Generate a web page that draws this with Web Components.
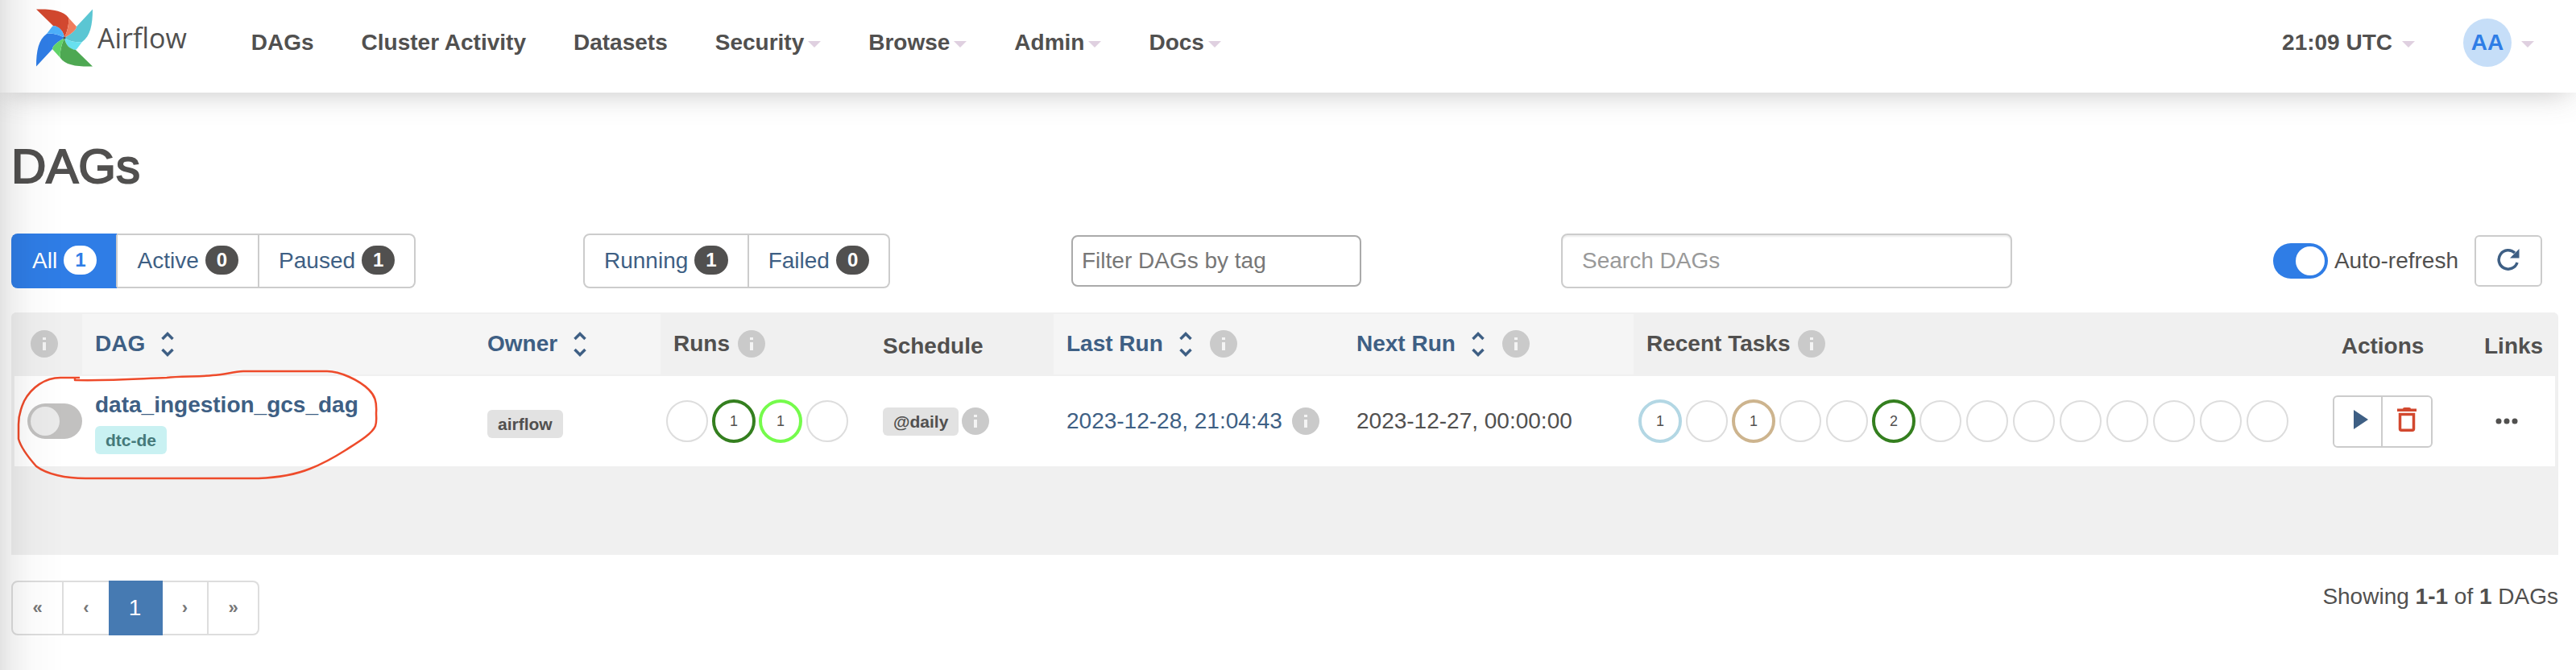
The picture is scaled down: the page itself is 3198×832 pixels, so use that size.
<!DOCTYPE html>
<html lang="en">
<head>
<meta charset="utf-8">
<title>DAGs - Airflow</title>
<style>
  body {
    margin: 0;
    background: #fff;
    color: #51504f;
    font: 28px/40px "Liberation Sans", Arial, sans-serif;
    --link: #3e5f84;
    --primary: #2f7de6;
    --line: #ccc;
    --panel: #f0f0f0;
  }
  /* soft shade along the window's left edge */
  body::after {
    content: "";
    position: fixed;
    inset: 0 auto 0 0;
    width: 80px;
    pointer-events: none;
    background: linear-gradient(90deg, rgba(0,0,0,.11), rgba(0,0,0,.06) 16px, rgba(0,0,0,.02) 40px, transparent);
  }
  main { padding: 59px 22px 0 14px; }
  h1 { margin: 0 0 50px; font-size: 60px; line-height: 66px; font-weight: 500; -webkit-text-stroke: 2px; }
  .filters {
    display: grid;
    grid-template-columns: 710fr 606fr 608fr 1238fr;
    align-items: center;
    margin-bottom: 30px;
  }
  .tail { display: flex; align-items: center; justify-content: space-between; padding-right: 20px; }
  .refresh { display: flex; align-items: center; gap: 20px; }
  .foot { display: flex; justify-content: space-between; align-items: flex-start; margin-top: 32px; }
</style>
</head>
<body>

<af-navbar>
  <af-nav-item>DAGs</af-nav-item>
  <af-nav-item>Cluster Activity</af-nav-item>
  <af-nav-item>Datasets</af-nav-item>
  <af-nav-item menu>Security</af-nav-item>
  <af-nav-item menu>Browse</af-nav-item>
  <af-nav-item menu>Admin</af-nav-item>
  <af-nav-item menu>Docs</af-nav-item>
  <af-nav-item slot="end" menu wide>21:09 UTC</af-nav-item>
  <af-nav-item slot="end" menu wide avatar>AA</af-nav-item>
</af-navbar>

<main>
  <h1>DAGs</h1>
  <div class="filters">
    <af-button-group>
      <af-filter-button position="first" active count="1">All</af-filter-button>
      <af-filter-button count="0">Active</af-filter-button>
      <af-filter-button position="last" count="1">Paused</af-filter-button>
    </af-button-group>
    <af-button-group>
      <af-filter-button position="first" count="1">Running</af-filter-button>
      <af-filter-button position="last" count="0">Failed</af-filter-button>
    </af-button-group>
    <af-text-field variant="tag" label="Filter DAGs by tag"></af-text-field>
    <div class="tail">
      <af-text-field variant="search" label="Search DAGs"></af-text-field>
      <div class="refresh">
        <af-switch checked>Auto-refresh</af-switch>
        <af-refresh-button></af-refresh-button>
      </div>
    </div>
  </div>
  <af-dag-table></af-dag-table>
  <div class="foot">
    <af-pagination></af-pagination>
    <div>Showing <strong>1-1</strong> of <strong>1</strong> DAGs</div>
  </div>
</main>

<script>
const define = (name, render) => customElements.define(name, class extends HTMLElement {
  constructor() {
    super();
    this.attachShadow({ mode: 'open' });
  }
  connectedCallback() {
    const t = document.createElement('template');
    t.innerHTML = render(this);
    this.shadowRoot.replaceChildren(t.content.cloneNode(true));
  }
});

define('af-logo', () => `
<style>
  :host { display: block; }
  a { display: flex; align-items: center; gap: 5px; color: inherit; text-decoration: none; }
  svg { display: block; }
  span { font: 400 34px/40px "Open Sans", sans-serif; }
</style>
<a href="#home">
  <svg width="72" height="72" viewBox="44 12 72 72" aria-hidden="true">
    <path fill="#5bc6d3" d="M115 12.500 95 34C94 40 86 44 80 48C87 53 97 54 102 53C112 46 115 32 115 12.500Z"/>
    <path fill="#68e0ef" d="M80 48C87 53 97 54 102 53L96 61Q95 63 93 63C86 62 81 56 80 48Z"/>
    <path fill="#d2482f" d="M45 12.500C64 12 79 14 85 23C86 32 83 41 80 48C79 40 74 34 66 33Z"/>
    <path fill="#f07c5c" d="M85 23 95 34C94 40 86 44 80 48C83 41 86 32 85 23Z"/>
    <g transform="rotate(180 80 48)">
      <path fill="#2f7de6" d="M115 12.500 95 34C94 40 86 44 80 48C87 53 97 54 102 53C112 46 115 32 115 12.500Z"/>
      <path fill="#4eb0fa" d="M80 48C87 53 97 54 102 53L96 61Q95 63 93 63C86 62 81 56 80 48Z"/>
      <path fill="#4ea852" d="M45 12.500C64 12 79 14 85 23C86 32 83 41 80 48C79 40 74 34 66 33Z"/>
      <path fill="#62d46a" d="M85 23 95 34C94 40 86 44 80 48C83 41 86 32 85 23Z"/>
    </g>
    <circle cx="80" cy="48" r="1.500" fill="#51504f"/>
  </svg>
  <span>Airflow</span>
</a>`);

define('af-navbar', () => `
<style>
  :host { display: block; }
  header {
    display: flex;
    align-items: center;
    box-sizing: border-box;
    min-height: 115px;
    padding: 0 52px 9px 44px;
    background: #fff;
    box-shadow: 0 8px 36px -8px rgba(81,80,79,.34);
  }
  af-logo { padding-bottom: 12px; }
  nav, .end { display: flex; align-items: center; }
  nav { gap: 59px; margin-left: 80px; }
  .end { gap: 60px; margin-left: auto; }
</style>
<header>
  <af-logo></af-logo>
  <nav><slot></slot></nav>
  <div class="end"><slot name="end"></slot></div>
</header>`);

define('af-nav-item', el => `
<style>
  :host { display: block; }
  a, button {
    display: flex; align-items: center; gap: 5px;
    margin: 0; padding: 0; border: 0; background: none;
    color: inherit; font: bold 28px/40px "Liberation Sans", Arial, sans-serif;
    text-decoration: none; white-space: nowrap;
  }
  :host([wide]) button { gap: 12px; }
  :host([avatar]) .label {
    width: 60px; border-radius: 50%; background: #c6def8; color: var(--primary);
    line-height: 60px; text-align: center;
  }
  i { border: 8px solid transparent; border-top-color: #dfd0e0; border-bottom: 0; margin-top: 4px; }
</style>
${el.hasAttribute('menu')
  ? '<button type="button"><span class="label"><slot></slot></span><i></i></button>'
  : '<a href="#nav"><slot></slot></a>'}`);

define('af-button-group', () => `
<style>:host { display: flex; }</style><slot></slot>`);

define('af-filter-button', el => `
<style>
  :host { display: block; }
  a {
    display: flex; align-items: center; gap: 8px; box-sizing: border-box; height: 68px;
    padding: 0 24px; border: 2px solid var(--line); border-left-width: 0;
    color: var(--link); text-decoration: none;
  }
  span { padding: 0 14px; border-radius: 18px; background: #51504f; color: #fff; font-weight: bold; font-size: 24px; line-height: 36px; margin-bottom: 2px; }
  :host([position=first]) a { border-left-width: 2px; border-radius: 8px 0 0 8px; }
  :host([position=last]) a { border-radius: 0 8px 8px 0; }
  :host([active]) a { background: var(--primary); border-color: var(--primary); color: #fff; border-right-color: var(--line); }
  :host([active]) span { background: #fff; color: var(--primary); }
</style>
<a href="#filter"><slot></slot><span>${el.getAttribute('count')}</span></a>`);

define('af-text-field', el => `
<style>
  :host { display: block; }
  input {
    display: block; box-sizing: border-box; margin: 0; background: #fff; color: #51504f;
    font: 28px/40px "Liberation Sans", Arial, sans-serif; border-radius: 8px;
  }
  :host([variant=tag]) input { width: 360px; height: 64px; padding: 0 11px; border: 2px solid #aaa; }
  :host([variant=search]) input { width: 560px; height: 68px; padding: 0 24px; border: 2px solid var(--line); box-shadow: inset 0 2px 2px rgba(0,0,0,.08); }
  input::placeholder { color: #777; opacity: 1; }
  :host([variant=search]) input::placeholder { color: #999; }
</style>
<input type="text" placeholder="${el.getAttribute('label')}" aria-label="${el.getAttribute('label')}">`);

define('af-switch', el => `
<style>
  :host { display: block; }
  label { display: flex; align-items: center; gap: 8px; white-space: nowrap; }
  input {
    appearance: none; display: block; box-sizing: border-box; margin: 0;
    width: 68px; height: 44px; padding: 4px; border-radius: 22px; background: #c2c1c0;
  }
  input::before { content: ""; display: block; width: 36px; height: 36px; border-radius: 50%; background: #ebebeb; }
  input:checked { background: var(--primary); }
  input:checked::before { margin-left: auto; background: #fff; }
</style>
<label><input type="checkbox" ${el.hasAttribute('checked') ? 'checked' : ''} ${el.hasAttribute('label') ? `aria-label="${el.getAttribute('label')}"` : ''}><slot></slot></label>`);

define('af-refresh-button', () => `
<style>
  :host { display: block; }
  button {
    display: flex; align-items: center; justify-content: center; box-sizing: border-box;
    width: 84px; height: 64px; margin: 0; padding: 0 0 4px;
    border: 2px solid var(--line); border-radius: 6px; background: #fff; color: var(--link);
  }
</style>
<button type="button" aria-label="Refresh">
  <svg width="28" height="28" viewBox="0 0 28 28" aria-hidden="true">
    <path fill="none" stroke="currentColor" stroke-width="3.500" d="M25 18A11.700 11.700 0 1 1 22 6"/>
    <path fill="currentColor" d="M27.500 1V12.500H16Z"/>
  </svg>
</button>`);

define('af-info', () => `
<style>:host { display: block; width: 34px; height: 34px; } svg { display: block; }</style>
<svg width="34" height="34" viewBox="0 0 34 34" role="img" aria-label="Info">
  <circle cx="17" cy="17" r="17" fill="#cacaca"/>
  <path fill="#f4f4f4" d="M15 9h4v3h-4zM15 15h4v10h-4z"/>
</svg>`);

define('af-sort', () => `
<style>:host { display: block; } a { display: flex; align-items: center; gap: 20px; color: var(--link); text-decoration: none; } svg { display: block; }</style>
<a href="#sort"><slot></slot>
  <svg width="16" height="32" viewBox="0 0 16 32" fill="none" stroke="currentColor" stroke-width="3.500" aria-hidden="true">
    <path d="M1.500 10 8 3.500l6.500 6.500M1.500 23 8 29.500l6.500-6.500"/>
  </svg>
</a>`);

define('af-tag', el => `
<style>
  :host { display: block; width: max-content; padding: 0 13px; border-radius: 6px; background: #e2e2e2; font: bold 21px/35px "Liberation Sans", Arial, sans-serif; }
  :host([teal]) { background: #c9f1f2; color: #45797a; }
  a { color: inherit; text-decoration: none; }
</style>
<a href="#tag"><slot></slot></a>`);

/* row of state circles; states is a list such as "-,1:#317c1e" */
define('af-states', el => `
<style>
  :host { display: flex; gap: 4px; }
  a {
    box-sizing: border-box; width: 54px; height: 54px; border-radius: 50%;
    border: 4px solid; font-size: 18px; line-height: 46px; text-align: center; text-decoration: none;
  }
  a span { color: #51504f; }
  i { box-sizing: border-box; width: 52px; height: 52px; margin: 1px; border: 2px solid #ddd; border-radius: 50%; }
</style>
${el.getAttribute('states').split(',').map(s => {
  const [n, c] = s.split(':');
  return c ? `<a href="#state" style="border-color:${c}"><span>${n}</span></a>` : '<i></i>';
}).join('')}`);

define('af-dag-table', () => `
<style>
  :host { display: block; position: relative; padding: 0 4px 110px; border-radius: 6px 6px 0 0; background: var(--panel); }
  table { width: 100%; table-layout: fixed; border-collapse: separate; border-spacing: 0; }
  th { box-sizing: border-box; height: 79px; padding: 0 0 2px 16px; text-align: left; border: solid var(--panel); border-width: 2px 0; }
  th.sort { background: #f5f5f5; }
  th.plain { padding-top: 6px; }
  td { box-sizing: border-box; height: 112px; padding: 0 0 0 16px; background: #fff; }
  .line { display: flex; align-items: center; }
  .runs { gap: 10px; }
  .last { gap: 22px; }
  .tight { gap: 4px; }
  .date { gap: 12px; }
  .states { padding-left: 6px; }
  .dag a { display: block; width: max-content; font-weight: bold; margin-bottom: 6px; }
  a { color: var(--link); text-decoration: none; }
  th.actions { padding-left: 0; text-align: center; }
  .group { display: flex; }
  button { display: flex; align-items: center; justify-content: center; box-sizing: border-box; width: 62px; height: 65px; margin: 0; padding: 0; border: 2px solid var(--line); border-radius: 6px 0 0 6px; background: #fff; color: var(--link); }
  button + button { width: 64px; margin-left: -2px; border-radius: 0 6px 6px 0; color: #d2482f; }
  button svg { margin-bottom: 4px; }
  .play { margin-left: 8px; }
  th.toggle { padding-left: 20px; }
  th.links { padding-left: 48px; }
  td.links { padding-left: 62px; }
  .links a { display: block; color: #51504f; }
  svg { display: block; }
  .mark { position: absolute; left: 0; top: 60px; pointer-events: none; }
</style>
<table>
  <colgroup>
    <col style="width:84px"><col style="width:487px"><col style="width:231px"><col style="width:260px"><col style="width:228px">
    <col style="width:360px"><col style="width:360px"><col><col style="width:156px"><col style="width:136px">
  </colgroup>
  <thead>
    <tr>
      <th class="toggle"><af-info></af-info></th>
      <th class="sort"><af-sort>DAG</af-sort></th>
      <th class="sort"><af-sort>Owner</af-sort></th>
      <th><div class="line runs">Runs<af-info></af-info></div></th>
      <th class="plain">Schedule</th>
      <th class="sort"><div class="line last"><af-sort>Last Run</af-sort><af-info></af-info></div></th>
      <th class="sort"><div class="line last"><af-sort>Next Run</af-sort><af-info></af-info></div></th>
      <th><div class="line runs">Recent Tasks<af-info></af-info></div></th>
      <th class="plain actions">Actions</th>
      <th class="plain links">Links</th>
    </tr>
  </thead>
  <tbody>
    <tr>
      <td><af-switch label="Pause/unpause data_ingestion_gcs_dag"></af-switch></td>
      <td class="dag"><a href="#dag">data_ingestion_gcs_dag</a><af-tag teal>dtc-de</af-tag></td>
      <td style="padding-top:6px"><af-tag>airflow</af-tag></td>
      <td class="states"><af-states states="-,1:#347f1f,1:#75fb4c,-"></af-states></td>
      <td><div class="line tight"><af-tag>@daily</af-tag><af-info></af-info></div></td>
      <td><div class="line date"><a href="#run">2023-12-28, 21:04:43</a><af-info></af-info></div></td>
      <td>2023-12-27, 00:00:00</td>
      <td class="states"><af-states states="1:#b3d7e4,-,1:#cdb48e,-,-,2:#347f1f,-,-,-,-,-,-,-,-"></af-states></td>
      <td>
        <div class="group">
          <button type="button" aria-label="Trigger DAG">
            <svg class="play" width="20" height="24" viewBox="0 0 20 24" aria-hidden="true"><path fill="currentColor" d="M1 0 19 12 1 24Z"/></svg>
          </button>
          <button type="button" aria-label="Delete DAG">
            <svg width="24" height="30" viewBox="0 0 24 30" aria-hidden="true">
              <path fill="currentColor" d="M0 1.500h7Q7 0 9 0h6q2 0 2 1.500h7V5H0z"/>
              <path fill="none" stroke="currentColor" stroke-width="3.500" d="M3.500 8.500h17v18q0 1.700-1.700 1.700H5.200q-1.700 0-1.700-1.700z"/>
            </svg>
          </button>
        </div>
      </td>
      <td class="links"><a href="#links" aria-label="Links">
        <svg width="28" height="8" viewBox="0 0 28 8" fill="currentColor" aria-hidden="true"><circle cx="4" cy="4" r="3.500"/><circle cx="14" cy="4" r="3.500"/><circle cx="24" cy="4" r="3.500"/></svg>
      </a></td>
    </tr>
  </tbody>
</table>
<svg class="mark" width="480" height="160" viewBox="14 448 480 160" fill="none" stroke="#ee4b2b" stroke-width="2.500" stroke-linejoin="round" aria-hidden="true">
  <path d="M99 469H75C56 469 39 481 30 498C24 511 23 520 23 527V545C26 556 37 570 45 579C58 589 82 594 106 594H321C346 593 370 588 385 582C403 575 418 566 429 559C443 550 462 539 466 529C468 522 467 520 467 513C468 498 465 491 458 484C446 472 422 461 406 461H302C288 462 279 465 264 466C250 468 222 467 207 469C175 470 140 473 93 472V469H99"/>
</svg>`);

define('af-pagination', () => `
<style>
  :host { display: block; }
  ul { display: flex; margin: 0; padding: 0; list-style: none; }
  a {
    display: block; box-sizing: border-box; height: 68px;
    border: 2px solid #ddd; border-left-width: 0; color: #777; text-decoration: none;
    line-height: 64px; text-align: center;
  }
  .arrow a { font-size: 22px; font-weight: bold; width: 57px; }
  li:first-child a { width: 65px; border-left-width: 2px; border-radius: 8px 0 0 8px; }
  li:last-child a { width: 63px; border-radius: 0 8px 8px 0; }
  li.before a { border-right: 0; width: 56px; }
  .current a { background: #467ab2; border-color: #467ab2; color: #fff; width: 67px; }
</style>
<nav aria-label="Pages"><ul>
  <li class="arrow"><a href="#first">«</a></li>
  <li class="arrow before"><a href="#prev">‹</a></li>
  <li class="current"><a href="#1" aria-current="page">1</a></li>
  <li class="arrow"><a href="#next">›</a></li>
  <li class="arrow"><a href="#last">»</a></li>
</ul></nav>`);
</script>
</body>
</html>
